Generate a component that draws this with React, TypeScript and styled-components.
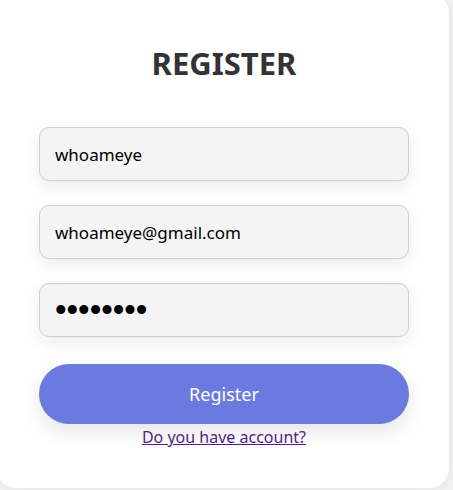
import React from 'react'
import styled, { createGlobalStyle } from 'styled-components'

const GlobalStyle = createGlobalStyle`
  html, body {
    margin: 0;
    padding: 0;
    background: #f1f1f1;
    font-family: 'Noto Sans', 'Open Sans', sans-serif;
  }
`

const Page = styled.div`
  width: 453px;
  height: 490px;
  overflow: hidden;
`

const Card = styled.form`
  box-sizing: border-box;
  width: 453px;
  height: 495px;
  margin: -7px 0 0 -4px;
  padding: 48px 40px 0 43px;
  background: #fff;
  border-radius: 20px;
  box-shadow: 0 0 12px rgba(0, 0, 0, 0.06);
  display: flex;
  flex-direction: column;
  align-items: stretch;
`

const Title = styled.h2`
  margin: 0 0 42px;
  text-align: center;
  font-size: 31px;
  line-height: 44px;
  font-weight: 700;
  color: #333;
`

const Field = styled.input<{ $secret?: boolean }>`
  box-sizing: border-box;
  width: 100%;
  height: 54px;
  margin-bottom: 24px;
  padding: 0 15px;
  border: 1px solid #cfcfcf;
  border-radius: 10px;
  background: #f4f4f4;
  box-shadow: 0 6px 16px rgba(0, 0, 0, 0.08);
  font-family: ${(p) => (p.$secret ? "'Liberation Sans', Arial, sans-serif" : "'Noto Sans', sans-serif")};
  font-size: ${(p) => (p.$secret ? '33px' : '17px')};
  color: #000;
  outline: none;
`

const Button = styled.button`
  box-sizing: border-box;
  width: 100%;
  height: 60px;
  margin-top: 3px;
  border: none;
  border-radius: 30px;
  background: #6c7ae0;
  color: #fff;
  font-family: 'Noto Sans', sans-serif;
  font-size: 18px;
  box-shadow: 0 8px 20px rgba(0, 0, 0, 0.1);
  cursor: pointer;
`

const Footer = styled.p`
  margin: 2px 0 0;
  text-align: center;
  font-size: 16px;
`

const AccountLink = styled.a`
  color: #551a8b;
  text-decoration: underline;
`

export default function App() {
  return (
    <Page>
      <GlobalStyle />
      <Card onSubmit={(e) => e.preventDefault()}>
        <Title>REGISTER</Title>
        <Field type="text" defaultValue="whoameye" readOnly />
        <Field type="email" defaultValue="whoameye@gmail.com" readOnly />
        <Field type="password" defaultValue="12345678" readOnly $secret />
        <Button type="submit">Register</Button>
        <Footer>
          <AccountLink href="#login">Do you have account?</AccountLink>
        </Footer>
      </Card>
    </Page>
  )
}
